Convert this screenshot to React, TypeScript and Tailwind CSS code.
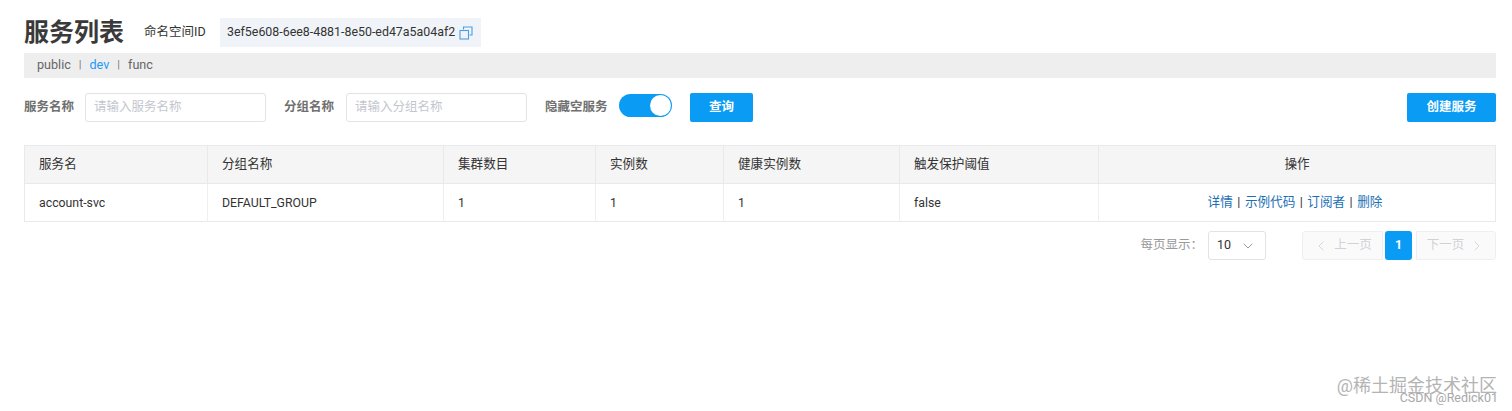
import { ChevronDown, ChevronLeft, ChevronRight } from 'lucide-react';

const FONT = "font-['Roboto','Noto_Sans_CJK_SC',sans-serif]";

const columns = [
  { title: '服务名', width: 'w-[183px]' },
  { title: '分组名称', width: 'w-[236px]' },
  { title: '集群数目', width: 'w-[152px]' },
  { title: '实例数', width: 'w-[128px]' },
  { title: '健康实例数', width: 'w-[176px]' },
  { title: '触发保护阈值', width: 'w-[199px]' },
];

const cells = ['account-svc', 'DEFAULT_GROUP', '1', '1', '1', 'false'];
const actions = ['详情', '示例代码', '订阅者', '删除'];

function CopyIcon() {
  return (
    <svg width="14" height="14" viewBox="0 0 14 14" fill="none" stroke="#4a9fe0" strokeWidth="1.1" className="ml-[4px]">
      <path d="M4.5 3.5V1h8.5v8h-2.5" />
      <rect x="1" y="4.5" width="8.5" height="8.5" />
    </svg>
  );
}

function TextField({ placeholder }: { placeholder: string }) {
  return (
    <div className="flex h-[29px] w-[181px] items-center rounded-[3px] border border-[#e2e3e7] bg-white pl-[8px] text-[12.5px] text-[#c4c6cf]">
      {placeholder}
    </div>
  );
}

export default function App() {
  return (
    <div className={`relative h-[411px] w-[1512px] overflow-hidden bg-white pl-[24px] pr-[16px] pt-[18px] ${FONT}`}>
      <div className="flex h-[29px] items-center">
        <h1 className="w-[120px] text-[25px] font-bold leading-[29px] text-[#3a3a3a]">服务列表</h1>
        <span className="w-[76px] text-[12.5px] text-[#333]">命名空间ID</span>
        <div className="flex h-[29px] items-center bg-[#f0f4f8] pl-[7px] pr-[8px] text-[12.4px] text-[#333]">
          3ef5e608-6ee8-4881-8e50-ed47a5a04af2
          <CopyIcon />
        </div>
      </div>

      <div className="mt-[6px] flex h-[25px] items-center bg-[#eeeeee] pl-[13px] text-[12.6px] text-[#666]">
        <span>public</span>
        <span className="mx-[8px] text-[11px] text-[#777]">|</span>
        <span className="text-[#209bfa]">dev</span>
        <span className="mx-[8px] text-[11px] text-[#777]">|</span>
        <span>func</span>
      </div>

      <div className="mt-[15px] flex h-[28px] items-center pt-[1px]">
        <span className="w-[61px] text-[12.5px] font-bold text-[#707070]">服务名称</span>
        <TextField placeholder="请输入服务名称" />
        <span className="ml-[18px] w-[62px] text-[12.5px] font-bold text-[#707070]">分组名称</span>
        <TextField placeholder="请输入分组名称" />
        <span className="ml-[18px] w-[74px] text-[12.5px] font-bold text-[#707070]">隐藏空服务</span>
        <div className="mb-[5px] flex h-[23px] w-[53px] items-center justify-end rounded-full bg-[#0a9bf5] pr-[1px]">
          <div className="h-[21px] w-[21px] rounded-full bg-white" />
        </div>
        <button className="ml-[18px] h-[29px] w-[63px] rounded-[2px] bg-[#0a9bf5] text-[12.5px] font-bold text-white">
          查询
        </button>
        <button className="ml-auto h-[29px] w-[89px] rounded-[2px] bg-[#0a9bf5] text-[12.5px] font-bold text-white">
          创建服务
        </button>
      </div>

      <table className="mt-[24px] w-[1472px] table-fixed border-collapse border border-[#e8e9ec] text-[12.6px] text-[#333]">
        <thead>
          <tr className="h-[38px] border-b border-[#e8e9ec] bg-[#f5f5f5] text-left">
            {columns.map((column) => (
              <th key={column.title} className={`${column.width} border-r border-[#e8e9ec] pl-[14px] font-normal`}>
                {column.title}
              </th>
            ))}
            <th className="text-center font-normal">操作</th>
          </tr>
        </thead>
        <tbody>
          <tr className="h-[38px] text-[12.3px]">
            {cells.map((cell, index) => (
              <td key={index} className="border-r border-[#eeeff2] pl-[14px] pt-[1px]">
                {cell}
              </td>
            ))}
            <td className="pr-[4px] text-center text-[12.6px] text-[#1a6fb5]">
              {actions.map((action, index) => (
                <span key={action}>
                  {index > 0 && <span className="mx-[4.5px] text-[#333]">|</span>}
                  {action}
                </span>
              ))}
            </td>
          </tr>
        </tbody>
      </table>

      <div className="mt-[9px] flex h-[29px] items-center justify-end text-[12.5px]">
        <span className="text-[#999]">每页显示：</span>
        <div className="ml-[5px] flex h-[29px] w-[58px] items-center justify-between rounded-[3px] border border-[#e2e3e7] pl-[8px] pr-[9px] text-[#333]">
          10
          <ChevronDown size={16} strokeWidth={1} className="text-[#666]" />
        </div>
        <div className="ml-[36px] flex h-[29px] w-[81px] items-center justify-center gap-[5px] rounded-l-[3px] border border-[#eeeff2] bg-[#fafafa] text-[#d0d2d8]">
          <ChevronLeft size={16} strokeWidth={1} className="text-[#c4c6cf]" />
          上一页
        </div>
        <div className="ml-[2px] flex h-[29px] w-[27px] items-center justify-center rounded-[3px] bg-[#0a9bf5] font-bold text-white">
          1
        </div>
        <div className="ml-[4px] flex h-[29px] w-[80px] items-center justify-center gap-[5px] rounded-r-[3px] border border-[#eeeff2] bg-[#fafafa] text-[#d0d2d8]">
          下一页
          <ChevronRight size={16} strokeWidth={1} className="text-[#c4c6cf]" />
        </div>
      </div>

      <div className="absolute right-[15px] top-[374px] text-[18px] leading-[24px] text-[#b4b4b4]">@稀土掘金技术社区</div>
      <div className="absolute right-[14px] top-[391px] text-[12.5px] leading-[14px] text-[#a8a8a8]">CSDN @Redick01</div>
    </div>
  );
}
